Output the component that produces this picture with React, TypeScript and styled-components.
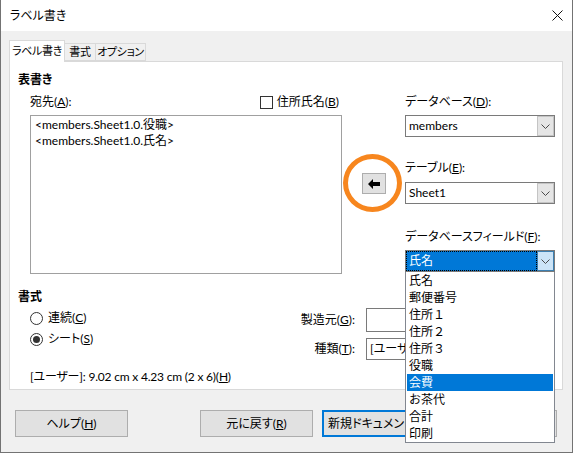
import React from 'react';
import styled, { createGlobalStyle } from 'styled-components';

const fields = ['氏名', '郵便番号', '住所１', '住所２', '住所３', '役職', '会費', 'お茶代', '合計', '印刷'];

function Chevron () {
    return (
        <svg width="9" height="5" viewBox="0 0 9 5">
            <path d="M0.5 0.5 L4.5 4.5 L8.5 0.5" fill="none" stroke="#4a4a4a" strokeWidth="1"/>
        </svg>
    )
}

function Select ({value, focused}: {value: string, focused?: boolean}) {
    return (
        <SelectBox>
            <SelectText $focused={focused}>{value}</SelectText>
            <SelectButton $focused={focused}><Chevron/></SelectButton>
        </SelectBox>
    )
}

function App () {
    return (
        <>
            <GlobalStyle/>
            <Window>
                <TitleBar>
                    <span>ラベル書き</span>
                    <CloseBox>
                        <svg width="11" height="11" viewBox="0 0 11 11">
                            <path d="M0.5 0.5 L10.5 10.5 M10.5 0.5 L0.5 10.5" stroke="#111" strokeWidth="1"/>
                        </svg>
                    </CloseBox>
                </TitleBar>
                <Body>
                    <Tabs>
                        <Tab $active $width={56}>ラベル書き</Tab>
                        <Tab $width={31}>書式</Tab>
                        <Tab $width={50}>オプション</Tab>
                    </Tabs>
                    <Panel>
                        <Heading>表書き</Heading>
                        <TopArea>
                            <LeftColumn>
                                <LabelRow>
                                    <span>宛先(<u>A</u>):</span>
                                    <CheckLabel><CheckBox/><span>住所氏名(<u>B</u>)</span></CheckLabel>
                                </LabelRow>
                                <TextArea>
                                    <div>&lt;members.Sheet1.0.役職&gt;</div>
                                    <div>&lt;members.Sheet1.0.氏名&gt;</div>
                                </TextArea>
                            </LeftColumn>
                            <MiddleColumn>
                                <ArrowButton>
                                    <svg width="12" height="10" viewBox="0 0 12 10">
                                        <polygon points="0,5 5,0 5,3 12,3 12,7 5,7 5,10" fill="#000"/>
                                    </svg>
                                </ArrowButton>
                            </MiddleColumn>
                            <RightColumn>
                                <Label>データベース(<u>D</u>):</Label>
                                <Field><Select value="members"/></Field>
                                <Label $gap={23}>テーブル(<u>E</u>):</Label>
                                <Field $gap={6}><Select value="Sheet1"/></Field>
                                <Label $gap={25}>データベースフィールド(<u>F</u>):</Label>
                                <Field>
                                    <Select value="氏名" focused/>
                                    <DropList>
                                        {fields.map((f) => (
                                            <DropItem key={f} $selected={f === '会費'}>{f}</DropItem>
                                        ))}
                                    </DropList>
                                </Field>
                            </RightColumn>
                        </TopArea>
                        <BottomArea>
                            <FormatColumn>
                                <Heading>書式</Heading>
                                <RadioRow $gap={5}><Radio/><span>連続(<u>C</u>)</span></RadioRow>
                                <RadioRow $gap={5}><Radio $checked/><span>シート(<u>S</u>)</span></RadioRow>
                                <SizeText>[ユーザー]: 9.02 cm x 4.23 cm (2 x 6)(<u>H</u>)</SizeText>
                            </FormatColumn>
                            <MakerColumn>
                                <MakerRow>
                                    <MakerLabel>製造元(<u>G</u>):</MakerLabel>
                                    <InputBox/>
                                </MakerRow>
                                <MakerRow $gap={6}>
                                    <MakerLabel>種類(<u>T</u>):</MakerLabel>
                                    <TypeBox>[ユーザー]</TypeBox>
                                </MakerRow>
                            </MakerColumn>
                        </BottomArea>
                    </Panel>
                    <ButtonRow>
                        <DialogButton $push>ヘルプ(<u>H</u>)</DialogButton>
                        <DialogButton>元に戻す(<u>R</u>)</DialogButton>
                        <DialogButton $default>新規ドキュメント(<u>N</u>)</DialogButton>
                        <DialogButton>キャンセル</DialogButton>
                    </ButtonRow>
                </Body>
                <Highlight/>
            </Window>
        </>
    )
}

const GlobalStyle = createGlobalStyle`
    html, body {
        margin: 0;
        padding: 0;
        background: #ffffff;
    }
    * {
        box-sizing: border-box;
    }
`

const Window = styled.div`
    position: relative;
    width: 573px;
    height: 453px;
    overflow: hidden;
    background-color: #f0f0f0;
    border-left: 1px solid #737373;
    border-right: 1px solid #737373;
    border-bottom: 1px solid #737373;
    font-family: Lato, "Noto Sans CJK JP", sans-serif;
    font-size: 12px;
    font-feature-settings: "palt";
    color: #000;
    line-height: 16px;
`

const TitleBar = styled.div`
    height: 31px;
    display: flex;
    align-items: center;
    justify-content: space-between;
    padding-left: 9px;
    background-color: #ffffff;
`

const CloseBox = styled.div`
    width: 30px;
    height: 31px;
    display: flex;
    align-items: center;
    justify-content: center;
`

const Body = styled.div`
    padding: 9px 9px 0 8px;
`

const Tabs = styled.div`
    display: flex;
    align-items: flex-end;
    height: 21px;
`

const Tab = styled.div<{$active?: boolean, $width: number}>`
    width: ${({$width}) => $width}px;
    height: ${({$active}) => $active ? '22px' : '18px'};
    margin-bottom: ${({$active}) => $active ? '-1px' : '0'};
    padding-top: ${({$active}) => $active ? '2px' : '0'};
    display: flex;
    justify-content: center;
    font-size: 11px;
    letter-spacing: -0.3px;
    background-color: ${({$active}) => $active ? '#ffffff' : '#f0f0f0'};
    border: 1px solid #d9d9d9;
    border-bottom: ${({$active}) => $active ? 'none' : '1px solid #d9d9d9'};
    border-left: ${({$active}) => $active ? '1px solid #d9d9d9' : 'none'};
    position: relative;
    z-index: ${({$active}) => $active ? 1 : 0};
    white-space: nowrap;
`

const Panel = styled.div`
    width: 554px;
    height: 329px;
    padding: 10px 0 0 8px;
    background-color: #ffffff;
    border: 1px solid #d9d9d9;
`

const Heading = styled.div`
    height: 16px;
    font-weight: bold;
`

const TopArea = styled.div`
    display: flex;
    margin-top: 6px;
`

const LeftColumn = styled.div`
    width: 312px;
    margin-left: 12px;
`

const LabelRow = styled.div`
    display: flex;
    justify-content: space-between;
    height: 16px;
    padding-right: 3px;
`

const CheckLabel = styled.span`
    display: flex;
    align-items: center;
    gap: 4px;
`

const CheckBox = styled.span`
    width: 13px;
    height: 13px;
    border: 1px solid #333333;
    background-color: #ffffff;
`

const TextArea = styled.div`
    height: 159px;
    margin-top: 5px;
    padding: 1px 4px;
    border: 1px solid #a0a0a0;
`

const MiddleColumn = styled.div`
    width: 63px;
`

const ArrowButton = styled.div`
    width: 24px;
    height: 21px;
    margin: 79px 0 0 20px;
    display: flex;
    align-items: center;
    justify-content: center;
    background-color: #e1e1e1;
    border: 1px solid #adadad;
`

const RightColumn = styled.div`
    width: 150px;
`

const Label = styled.div<{$gap?: number}>`
    height: 16px;
    margin-top: ${({$gap}) => $gap || 0}px;
    white-space: nowrap;
`

const Field = styled.div<{$gap?: number}>`
    position: relative;
    margin-top: ${({$gap}) => $gap || 5}px;
`

const SelectBox = styled.div`
    display: flex;
    height: 22px;
    border: 1px solid #7a7a7a;
    background-color: #ffffff;
`

const SelectText = styled.div<{$focused?: boolean}>`
    flex: 1;
    padding-left: 2px;
    line-height: 18px;
    color: ${({$focused}) => $focused ? '#ffffff' : '#000000'};
    background-color: ${({$focused}) => $focused ? '#0078d7' : 'transparent'};
    border: 1px ${({$focused}) => $focused ? 'dotted #000000' : 'solid transparent'};
`

const SelectButton = styled.div<{$focused?: boolean}>`
    width: 17px;
    display: flex;
    align-items: center;
    justify-content: center;
    background-color: ${({$focused}) => $focused ? '#cce4f7' : '#e5e5e5'};
    border: 1px solid ${({$focused}) => $focused ? '#3c7fb1' : '#c4c4c4'};
`

const DropList = styled.div`
    position: absolute;
    top: 100%;
    left: 0;
    width: 150px;
    height: 171px;
    z-index: 5;
    padding: 0 1px;
    font-feature-settings: normal;
    background-color: #ffffff;
    border: 1px solid #828790;
    border-top: none;
`

const DropItem = styled.div<{$selected?: boolean}>`
    height: 17px;
    line-height: 17px;
    padding-left: 2px;
    color: ${({$selected}) => $selected ? '#ffffff' : '#000000'};
    background-color: ${({$selected}) => $selected ? '#0078d7' : 'transparent'};
`

const BottomArea = styled.div`
    display: flex;
    margin-top: 15px;
`

const FormatColumn = styled.div`
    width: 262px;
`

const RadioRow = styled.div<{$gap?: number}>`
    display: flex;
    align-items: center;
    gap: 5px;
    height: 16px;
    margin: ${({$gap}) => $gap || 0}px 0 0 12px;
`

const Radio = styled.span<{$checked?: boolean}>`
    width: 13px;
    height: 13px;
    border-radius: 50%;
    border: 1px solid #333333;
    display: flex;
    align-items: center;
    justify-content: center;
    &::after {
        content: '';
        width: 7px;
        height: 7px;
        border-radius: 50%;
        background-color: ${({$checked}) => $checked ? '#333333' : 'transparent'};
    }
`

const SizeText = styled.div`
    margin: 22px 0 0 12px;
    white-space: nowrap;
    letter-spacing: -0.2px;
`

const MakerColumn = styled.div`
    margin-top: 19px;
`

const MakerRow = styled.div<{$gap?: number}>`
    display: flex;
    align-items: center;
    gap: 11px;
    margin-top: ${({$gap}) => $gap || 0}px;
`

const MakerLabel = styled.div`
    width: 75px;
    text-align: right;
`

const InputBox = styled.div`
    width: 180px;
    height: 24px;
    border: 1px solid #7a7a7a;
    background-color: #ffffff;
`

const TypeBox = styled.div`
    width: 180px;
    height: 22px;
    padding-left: 3px;
    line-height: 20px;
    border: 1px solid #7a7a7a;
    background-color: #ffffff;
`

const ButtonRow = styled.div`
    display: flex;
    gap: 9px;
    margin-top: 20px;
    padding: 0 6px;
`

const DialogButton = styled.div<{$default?: boolean, $push?: boolean}>`
    width: 113px;
    height: 27px;
    display: flex;
    align-items: center;
    justify-content: center;
    margin-right: ${({$push}) => $push ? 'auto' : '0'};
    background-color: #e1e1e1;
    border: ${({$default}) => $default ? '2px solid #0078d7' : '1px solid #adadad'};
    white-space: nowrap;
`

const Highlight = styled.div`
    position: absolute;
    left: 342px;
    top: 154px;
    width: 59px;
    height: 58px;
    border: 5px solid #f7861e;
    border-radius: 50%;
    pointer-events: none;
`

export default App
